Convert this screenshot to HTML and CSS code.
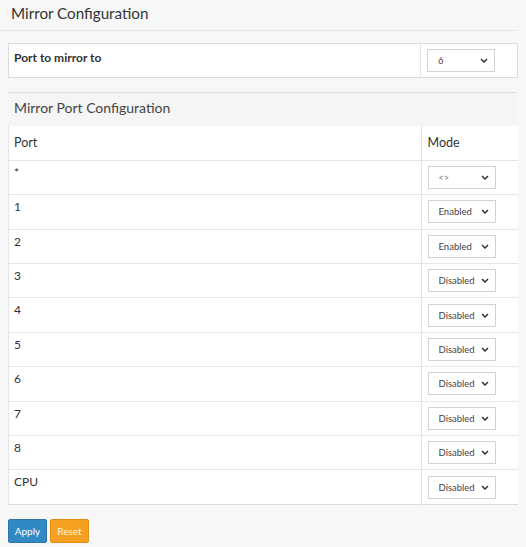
FILE: index.html
```html
<!DOCTYPE html>
<html>
<head>
<meta charset="utf-8">
<link rel="stylesheet" href="styles.css">
</head>
<body>
<h1 class="page-title">Mirror Configuration</h1>
<div class="content">
  <table class="grid top-table">
    <tr>
      <td class="label">Port to mirror to</td>
      <td class="mode-cell">
        <div class="sel"><span>6</span><svg class="chev" width="8" height="5" viewBox="0 0 8 5"><path d="M1 1 L4 4 L7 1" fill="none" stroke="#333" stroke-width="1.5"/></svg></div>
      </td>
    </tr>
  </table>

  <div class="section-head">Mirror Port Configuration</div>

  <table class="grid ports">
    <tr class="head"><td>Port</td><td class="mode-cell">Mode</td></tr>
    <tr><td>*</td><td class="mode-cell"><div class="sel"><span class="dim">&lt;&gt;</span><svg class="chev" width="8" height="5" viewBox="0 0 8 5"><path d="M1 1 L4 4 L7 1" fill="none" stroke="#333" stroke-width="1.5"/></svg></div></td></tr>
    <tr><td>1</td><td class="mode-cell"><div class="sel"><span>Enabled</span><svg class="chev" width="8" height="5" viewBox="0 0 8 5"><path d="M1 1 L4 4 L7 1" fill="none" stroke="#333" stroke-width="1.5"/></svg></div></td></tr>
    <tr><td>2</td><td class="mode-cell"><div class="sel"><span>Enabled</span><svg class="chev" width="8" height="5" viewBox="0 0 8 5"><path d="M1 1 L4 4 L7 1" fill="none" stroke="#333" stroke-width="1.5"/></svg></div></td></tr>
    <tr><td>3</td><td class="mode-cell"><div class="sel"><span>Disabled</span><svg class="chev" width="8" height="5" viewBox="0 0 8 5"><path d="M1 1 L4 4 L7 1" fill="none" stroke="#333" stroke-width="1.5"/></svg></div></td></tr>
    <tr><td>4</td><td class="mode-cell"><div class="sel"><span>Disabled</span><svg class="chev" width="8" height="5" viewBox="0 0 8 5"><path d="M1 1 L4 4 L7 1" fill="none" stroke="#333" stroke-width="1.5"/></svg></div></td></tr>
    <tr><td>5</td><td class="mode-cell"><div class="sel"><span>Disabled</span><svg class="chev" width="8" height="5" viewBox="0 0 8 5"><path d="M1 1 L4 4 L7 1" fill="none" stroke="#333" stroke-width="1.5"/></svg></div></td></tr>
    <tr><td>6</td><td class="mode-cell"><div class="sel"><span>Disabled</span><svg class="chev" width="8" height="5" viewBox="0 0 8 5"><path d="M1 1 L4 4 L7 1" fill="none" stroke="#333" stroke-width="1.5"/></svg></div></td></tr>
    <tr><td>7</td><td class="mode-cell"><div class="sel"><span>Disabled</span><svg class="chev" width="8" height="5" viewBox="0 0 8 5"><path d="M1 1 L4 4 L7 1" fill="none" stroke="#333" stroke-width="1.5"/></svg></div></td></tr>
    <tr><td>8</td><td class="mode-cell"><div class="sel"><span>Disabled</span><svg class="chev" width="8" height="5" viewBox="0 0 8 5"><path d="M1 1 L4 4 L7 1" fill="none" stroke="#333" stroke-width="1.5"/></svg></div></td></tr>
    <tr><td>CPU</td><td class="mode-cell"><div class="sel"><span>Disabled</span><svg class="chev" width="8" height="5" viewBox="0 0 8 5"><path d="M1 1 L4 4 L7 1" fill="none" stroke="#333" stroke-width="1.5"/></svg></div></td></tr>
  </table>

  <div class="buttons">
    <button class="btn apply">Apply</button>
    <button class="btn reset">Reset</button>
  </div>
</div>
</body>
</html>
```
FILE: styles.css
```css
* { box-sizing: border-box; }
body {
  margin: 0;
  background: #f7f7f7;
  font-family: Lato, "Open Sans", sans-serif;
  color: #333;
}
.page-title {
  margin: 0;
  font-size: 15.2px;
  font-weight: normal;
  height: 31px;
  padding: 4px 0 0 11px;
  border-bottom: 1px solid #e6e6e6;
  width: 518px;
}
.content {
  padding: 12px 8px 0 8px;
}
.grid {
  border-collapse: collapse;
  width: 510px;
  background: #fff;
  font-size: 12px;
}
.top-table {
  border: 1px solid #dcdcdc;
}
.top-table td {
  height: 34px;
  padding: 0 5px;
}
.top-table .label {
  vertical-align: top;
  padding-top: 6px;
}
.label {
  font-weight: bold;
}
.mode-cell {
  width: 97px;
  border-left: 1px solid #e3e3e3;
}
.top-table .mode-cell, .ports .mode-cell {
  padding: 0 6px;
}
.sel {
  position: relative;
  width: 68px;
  height: 23px;
  border: 1px solid #d2d2d2;
  background: #fff;
  font-size: 9.5px;
  line-height: 21px;
  padding-left: 10px;
  color: #444;
}
.sel .dim { color: #777; font-size: 9px; }
.chev {
  position: absolute;
  right: 6px;
  top: 8px;
}
.section-head {
  margin-top: 14px;
  width: 508px;
  height: 34px;
  border-top: 1px solid #dcdcdc;
  background: #f5f5f5;
  font-size: 14px;
  padding: 6px 0 0 6px;
  color: #444;
}
.ports {
  border-bottom: 1px solid #dcdcdc;
  border-left: 1px solid #e6e6e6;
}
.ports td {
  height: 34.4px;
  padding: 0 5px;
  border-top: 1px solid #e6e6e6;
}
.ports tr.head td {
  border-top: none;
  font-size: 12.5px;
}
.ports tr:not(.head) td:first-child {
  vertical-align: top;
  padding-top: 4px;
}
.buttons {
  display: flex;
  gap: 3px;
  margin-top: 14px;
}
.btn {
  font-family: Lato, sans-serif;
  font-size: 10px;
  height: 24px;
  width: 39px;
  border-radius: 2px;
  color: #fff;
  padding: 0;
  cursor: pointer;
}
.apply {
  background: #3189c4;
  border: 1px solid #2a77ad;
}
.reset {
  background: #f5a020;
  border: 1px solid #e08e10;
  color: #fff3dc;
}
```
